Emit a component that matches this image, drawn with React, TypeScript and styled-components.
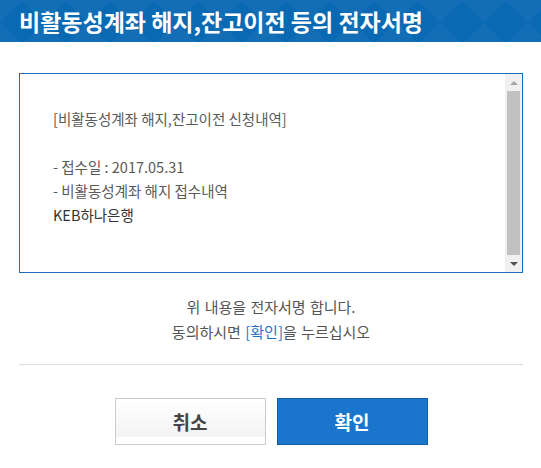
import styled, { createGlobalStyle } from "styled-components"

const GlobalStyle = createGlobalStyle`
    html, body {
        margin: 0;
        padding: 0;
        background: #ffffff;
    }
    body {
        font-family: "Noto Sans CJK KR", "Noto Sans", sans-serif;
        color: #555555;
    }
`

const lines = [
    { text: "[비활동성계좌 해지,잔고이전 신청내역]" },
    { text: "" },
    { text: "- 접수일 : 2017.05.31" },
    { text: "- 비활동성계좌 해지 접수내역" },
    { text: "KEB하나은행", strong: true },
]

export default function App() {
    return (
        <>
            <GlobalStyle />
            <Header>
                <Title>비활동성계좌 해지,잔고이전 등의 전자서명</Title>
            </Header>

            <Body>
                <TextBox>
                    <TextContent>
                        {lines.map((line, i) => (
                            <Line key={i} $strong={line.strong}>{line.text || "\u00a0"}</Line>
                        ))}
                    </TextContent>
                    <ScrollBar>
                        <Arrow $up />
                        <Thumb />
                        <Arrow />
                    </ScrollBar>
                </TextBox>

                <Message>
                    <p>위 내용을 전자서명 합니다.</p>
                    <p>동의하시면 <Accent>[확인]</Accent>을 누르십시오</p>
                </Message>

                <Divider />

                <ButtonRow>
                    <Button>취소</Button>
                    <Button $primary>확인</Button>
                </ButtonRow>
            </Body>
        </>
    )
}

const Header = styled.header`
    height: 42px;
    display: flex;
    align-items: center;
    padding: 0 19px;
    background-color: #0a69b3;
    background-image:
        linear-gradient(45deg, rgba(255,255,255,0.035) 25%, transparent 25%, transparent 75%, rgba(255,255,255,0.035) 75%),
        linear-gradient(-45deg, rgba(255,255,255,0.035) 25%, transparent 25%, transparent 75%, rgba(255,255,255,0.035) 75%);
    background-size: 44px 44px;
`
const Title = styled.h1`
    margin: 0;
    font-size: 23px;
    font-weight: 700;
    color: #ffffff;
    line-height: 1;
`
const Body = styled.main`
    padding: 31px 18px 0 19px;
`
const TextBox = styled.div`
    height: 200px;
    box-sizing: border-box;
    border: 1px solid #1a6db6;
    display: flex;
`
const TextContent = styled.div`
    flex: 1;
    padding: 33px 33px 0;
`
const Line = styled.div<{ $strong?: boolean }>`
    font-size: 14.5px;
    line-height: 24px;
    color: ${p => p.$strong ? "#333333" : "#5a5a5a"};
    white-space: nowrap;
`
const ScrollBar = styled.div`
    width: 17px;
    background: #f0f0f0;
    display: flex;
    flex-direction: column;
    align-items: flex-end;
`
const Thumb = styled.div`
    flex: 1;
    width: 13px;
    margin: 0 2px 0 0;
    background: #c1c1c1;
`
const Arrow = styled.div<{ $up?: boolean }>`
    width: 17px;
    height: 17px;
    display: flex;
    align-items: center;
    justify-content: center;
    &::before {
        content: "";
        width: 0;
        height: 0;
        border-left: 4px solid transparent;
        border-right: 4px solid transparent;
        ${p => p.$up
            ? "border-bottom: 4px solid #a3a3a3;"
            : "border-top: 4px solid #505050;"}
    }
`
const Message = styled.div`
    margin-top: 21px;
    text-align: center;
    font-size: 15px;
    line-height: 25px;
    word-spacing: 1px;
    color: #555555;
    p {
        margin: 0;
    }
`
const Accent = styled.span`
    color: #1f74c8;
`
const Divider = styled.hr`
    margin: 20px 0 0;
    border: none;
    border-top: 1px solid #dddddd;
`
const ButtonRow = styled.div`
    margin-top: 33px;
    display: flex;
    justify-content: center;
    gap: 11px;
`
const Button = styled.button<{ $primary?: boolean }>`
    width: 151px;
    height: 47px;
    box-sizing: border-box;
    font-family: "Noto Sans CJK KR", "Noto Sans", sans-serif;
    font-size: 19px;
    font-weight: 700;
    cursor: pointer;
    border: 1px solid ${p => p.$primary ? "#0f5ea6" : "#cccccc"};
    color: ${p => p.$primary ? "#ffffff" : "#444444"};
    background: ${p => p.$primary
        ? "#1976cc"
        : "linear-gradient(to bottom, #ffffff 0%, #f3f3f3 85%, #ffffff 85%)"};
`
